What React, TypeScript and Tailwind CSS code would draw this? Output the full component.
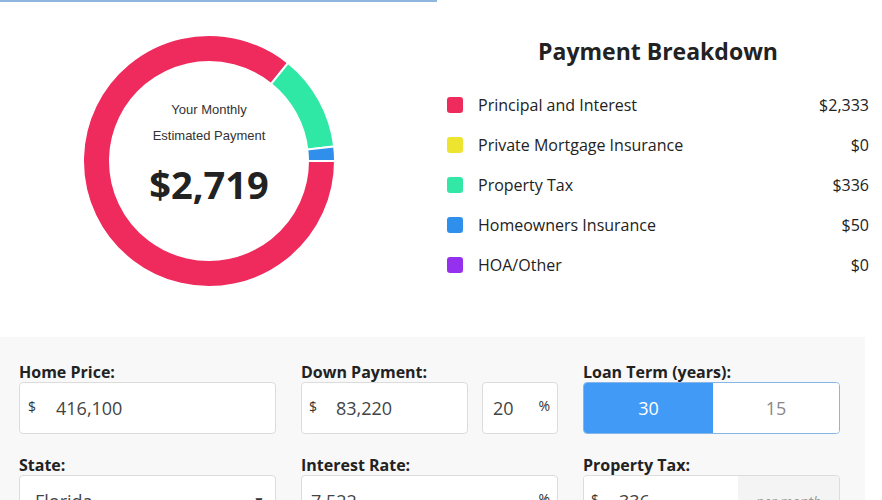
import React from "react";

const rows = [
  { label: "Principal and Interest", value: 2333, color: "bg-[#ef2a5c]" },
  { label: "Private Mortgage Insurance", value: 0, color: "bg-[#ece42f]" },
  { label: "Property Tax", value: 336, color: "bg-[#33e8a6]" },
  { label: "Homeowners Insurance", value: 50, color: "bg-[#2f8fed]" },
  { label: "HOA/Other", value: 0, color: "bg-[#9430ee]" },
];

const arcColors = ["#ef2a5c", "#ece42f", "#2fe8a5", "#2f8fea", "#9430ee"];

function sector(cx: number, cy: number, r1: number, r2: number, a0: number, a1: number) {
  const rad = (a: number) => (a * Math.PI) / 180;
  const p = (r: number, a: number) => `${(cx + r * Math.cos(rad(a))).toFixed(2)} ${(cy + r * Math.sin(rad(a))).toFixed(2)}`;
  const large = a1 - a0 > 180 ? 1 : 0;
  return `M ${p(r2, a0)} A ${r2} ${r2} 0 ${large} 1 ${p(r2, a1)} L ${p(r1, a1)} A ${r1} ${r1} 0 ${large} 0 ${p(r1, a0)} Z`;
}

function Donut() {
  const total = rows.reduce((s, r) => s + r.value, 0);
  let start = 0;
  const arcs = rows.map((r, i) => {
    const sweep = (r.value / total) * 360;
    const a0 = start;
    start += sweep;
    if (sweep === 0) return null;
    return <path key={i} d={sector(127, 127, 99, 126, a0, a0 + sweep)} fill={arcColors[i]} stroke="#fff" strokeWidth={2} />;
  });
  return (
    <div className="relative w-[254px] h-[254px]">
      <svg width="254" height="254" viewBox="0 0 254 254">{arcs}</svg>
      <div className="absolute inset-0 flex flex-col items-center pt-[63px]">
        <div className="text-[13px] leading-[26px] text-[#333]" style={{ fontFamily: '"Liberation Sans", Arial, sans-serif' }}>Your Monthly</div>
        <div className="text-[13px] leading-[26px] text-[#333]" style={{ fontFamily: '"Liberation Sans", Arial, sans-serif' }}>Estimated Payment</div>
        <div className="mt-[13px] text-[38px] leading-[44px] font-bold text-[#222]">$2,719</div>
      </div>
    </div>
  );
}

function Label({ children }: { children: React.ReactNode }) {
  return <div className="text-[16px] leading-[20px] font-bold text-[#222]">{children}</div>;
}

function Box({ className = "", children }: { className?: string; children: React.ReactNode }) {
  return (
    <div className={"h-[52px] bg-white border border-[#dcdcdc] rounded-[4px] flex items-center " + className}>
      {children}
    </div>
  );
}

export default function App() {
  return (
    <div className="w-[882px] h-[500px] overflow-hidden bg-white text-[#222]" style={{ fontFamily: '"Open Sans", sans-serif' }}>
      <div className="w-[437px] h-[2px] bg-[#8fb6df]" />
      <div className="flex h-[335px]">
        <div className="w-[435px] pl-[82px] pt-[32px]">
          <Donut />
        </div>
        <div className="flex-1 pl-[12px] pr-[13px]">
          <h2 className="text-center text-[23px] leading-[30px] font-bold text-[#222] mt-[34px] mb-[19px]">Payment Breakdown</h2>
          <div className="flex flex-col">
            {rows.map((r) => (
              <div key={r.label} className="flex items-center h-[40px]">
                <span className={"w-[16px] h-[16px] rounded-[3px] mr-[15px] " + r.color} />
                <span className="flex-1 text-[16px] text-[#222]">{r.label}</span>
                <span className="text-[16px] text-[#222]">${r.value.toLocaleString("en-US")}</span>
              </div>
            ))}
          </div>
        </div>
      </div>
      <div className="w-[865px] h-[200px] bg-[#f8f8f8] pl-[19px] pt-[25px]">
        <div className="grid grid-cols-[257px_257px_257px] gap-x-[25px] gap-y-[21px]">
          <div>
            <Label>Home Price:</Label>
            <Box className="px-[8px]">
              <span className="text-[14px] text-[#333] -mt-[4px] w-[28px]">$</span>
              <span className="text-[18px] text-[#444]">416,100</span>
            </Box>
          </div>
          <div>
            <Label>Down Payment:</Label>
            <div className="flex gap-[14px]">
              <Box className="w-[167px] px-[7px]">
                <span className="text-[14px] text-[#333] -mt-[4px] w-[27px]">$</span>
                <span className="text-[18px] text-[#444]">83,220</span>
              </Box>
              <Box className="flex-1 pl-[10px] pr-[7px] justify-between">
                <span className="text-[18px] text-[#444]">20</span>
                <span className="text-[14px] text-[#333] -mt-[6px]">%</span>
              </Box>
            </div>
          </div>
          <div>
            <Label>Loan Term (years):</Label>
            <div className="h-[52px] flex rounded-[4px] border border-[#86b6e8] overflow-hidden">
              <div className="w-[129px] bg-[#419bf6] text-white text-[18px] flex items-center justify-center">30</div>
              <div className="flex-1 bg-white text-[#888] text-[18px] flex items-center justify-center">15</div>
            </div>
          </div>
          <div>
            <Label>State:</Label>
            <Box className="pl-[15px] pr-[10px] justify-between">
              <span className="text-[18px] text-[#444]">Florida</span>
              <span className="text-[12px] text-[#333]">▼</span>
            </Box>
          </div>
          <div>
            <Label>Interest Rate:</Label>
            <Box className="pl-[9px] pr-[7px] justify-between">
              <span className="text-[18px] text-[#444]">7.522</span>
              <span className="text-[14px] text-[#333] -mt-[6px]">%</span>
            </Box>
          </div>
          <div>
            <Label>Property Tax:</Label>
            <div className="h-[52px] flex rounded-[4px] border border-[#dcdcdc] overflow-hidden">
              <div className="w-[154px] bg-white flex items-center px-[7px]">
                <span className="text-[14px] text-[#333] -mt-[4px] w-[28px]">$</span>
                <span className="text-[18px] text-[#444]">336</span>
              </div>
              <div className="flex-1 bg-[#f4f4f4] flex items-center justify-center text-[14px] italic text-[#999]">per month</div>
            </div>
          </div>
        </div>
      </div>
    </div>
  );
}
